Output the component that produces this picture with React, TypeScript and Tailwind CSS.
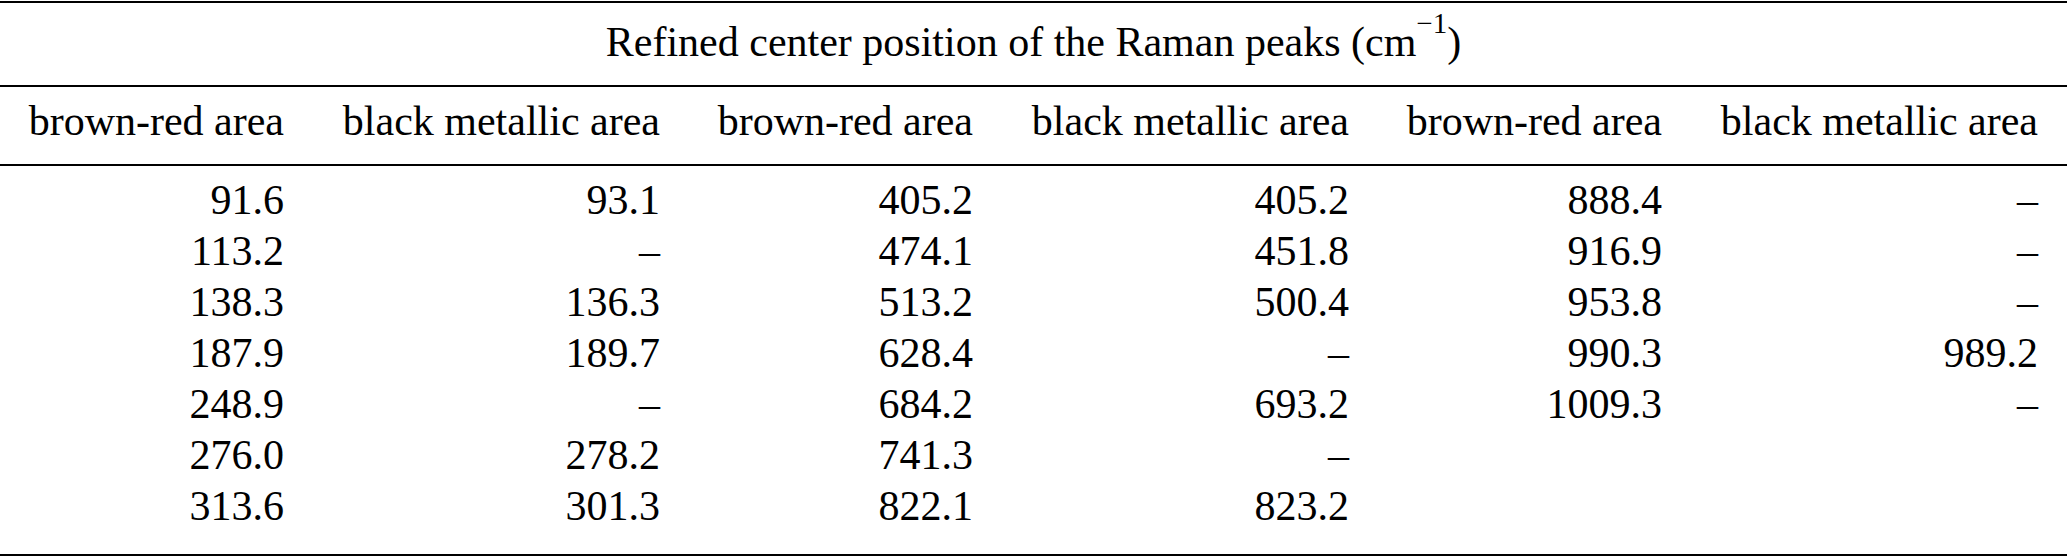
const headers = [
  "brown-red area",
  "black metallic area",
  "brown-red area",
  "black metallic area",
  "brown-red area",
  "black metallic area",
];

const rows: string[][] = [
  ["91.6", "93.1", "405.2", "405.2", "888.4", "–"],
  ["113.2", "–", "474.1", "451.8", "916.9", "–"],
  ["138.3", "136.3", "513.2", "500.4", "953.8", "–"],
  ["187.9", "189.7", "628.4", "–", "990.3", "989.2"],
  ["248.9", "–", "684.2", "693.2", "1009.3", "–"],
  ["276.0", "278.2", "741.3", "–", "", ""],
  ["313.6", "301.3", "822.1", "823.2", "", ""],
];

const cols = "grid grid-cols-[313px_376px_313px_376px_313px_376px]";

export default function App() {
  return (
    <div className="w-[2067px] h-[557px] bg-white text-black [font-family:Liberation_Serif,serif] text-[42px] leading-[51px]">
      <div className="h-[1px]" />
      <div className="h-[2px] bg-black" />

      {/* spanning title */}
      <div className="h-[82px] pt-[14px] text-center whitespace-nowrap">
        Refined center position of the Raman peaks (cm
        <span className="relative -top-[23px] text-[29px] leading-none">−1</span>)
      </div>
      <div className="h-[1.5px] bg-black" />

      {/* column headers */}
      <div className={`${cols} h-[77.5px] pt-[9px]`}>
        {headers.map((h, i) => (
          <div key={i} className="text-right pr-[29px] whitespace-nowrap">
            {h}
          </div>
        ))}
      </div>
      <div className="h-[1.5px] bg-black" />

      {/* data */}
      <div className="h-[388px] pt-[9px]">
        {rows.map((r, ri) => (
          <div key={ri} className={`${cols} h-[51px]`}>
            {r.map((v, ci) => (
              <div key={ci} className="text-right pr-[29px] whitespace-nowrap">
                {v}
              </div>
            ))}
          </div>
        ))}
      </div>
      <div className="h-[2px] bg-black" />
    </div>
  );
}
